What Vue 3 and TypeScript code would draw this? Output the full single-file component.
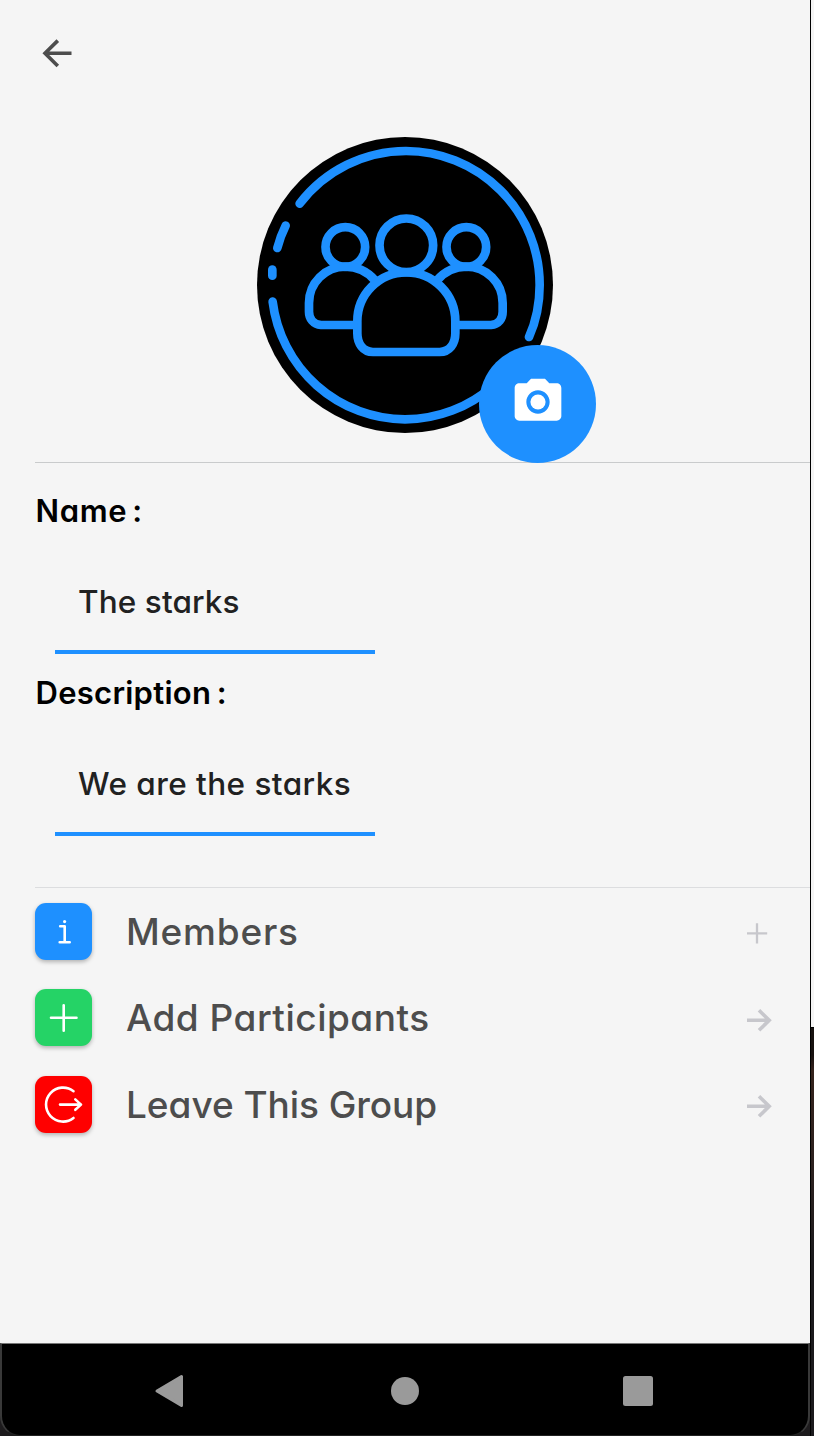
<script setup lang="ts">
type Kind = 'info' | 'add' | 'leave'

interface Field {
  label: string
  value: string
  key: string
}

interface Action {
  kind: Kind
  label: string
}

const fields: Field[] = [
  { key: 'name', label: 'Name :', value: 'The starks' },
  { key: 'description', label: 'Description :', value: 'We are the starks' },
]

const actions: Action[] = [
  { kind: 'info', label: 'Members' },
  { kind: 'add', label: 'Add Participants' },
  { kind: 'leave', label: 'Leave This Group' },
]
</script>

<template>
  <div class="desktop">
    <div class="screen">
      <header class="top">
        <svg class="back" width="32" height="32" viewBox="0 0 32 32">
          <path d="M30.5 15.3H4M16.8 2.6 4 15.3l12.8 12.8" />
        </svg>
      </header>

      <section class="hero">
        <div class="avatar">
          <svg class="group" width="296" height="296" viewBox="51 51 888 888">
            <circle class="disc" cx="495" cy="495" r="444" />
            <g class="lines">
              <path d="M179 251A403 403 0 0 1 498 93A402 402 0 0 1 899 495Q899 580 867 651" />
              <path d="M137 317Q121 349 112 384" />
              <path d="M97 449V467" />
              <path d="M98 545A403 403 0 0 0 495 898A403 403 0 0 0 760 797" />
              <circle cx="499" cy="376" r="80.5" />
              <circle cx="316" cy="381" r="59.5" />
              <circle cx="679" cy="381" r="59.5" />
              <path d="M399 696C369 696 352 671 352 640V604A147 147 0 0 1 646 604V640C646 671 629 696 599 696Z" />
              <path class="open" d="M352 615H243C220 613 207 596 207 575V549A109 109 0 0 1 316 440C352 440 380 453 404 480" />
              <path class="open" d="M646 615H753C776 613 788 596 788 575V549A109 109 0 0 0 679 440C643 440 616 453 592 480" />
            </g>
          </svg>
          <div class="camera">
            <svg width="56" height="56" viewBox="0 0 24 24">
              <circle cx="12" cy="12" r="3.25" />
              <path d="M9 2 7.17 4H4c-1.1 0-2 .9-2 2v12c0 1.1.9 2 2 2h16c1.1 0 2-.9 2-2V6c0-1.1-.9-2-2-2h-3.17L15 2H9zm3 15c-2.76 0-5-2.24-5-5s2.24-5 5-5 5 2.24 5 5-2.24 5-5 5z" />
            </svg>
          </div>
        </div>
      </section>

      <section class="fields">
        <div v-for="f in fields" :key="f.key" class="field" :class="f.key">
          <div class="label">{{ f.label }}</div>
          <div class="input"><span>{{ f.value }}</span></div>
        </div>
      </section>

      <section class="actions">
        <div v-for="a in actions" :key="a.kind" class="row" :class="a.kind">
          <div class="tile">
            <svg width="57" height="57" viewBox="0 0 57 57">
              <template v-if="a.kind === 'info'">
                <path d="M25.2 23.2h4.5V39M24.7 39.2h10" />
                <circle class="dot" cx="29.6" cy="18.6" r="1.6" />
              </template>
              <path v-else-if="a.kind === 'add'" d="M28.7 16.3v25.4M16 28.7h25.5" />
              <path v-else d="M38.5 15.2A17 17 0 1 0 38.5 42M25 28.6h21M40.3 23.4l5.7 5.2-5.7 5.2" />
            </svg>
          </div>
          <span class="caption">{{ a.label }}</span>
          <svg class="hint" width="28" height="28" viewBox="0 0 28 28">
            <path v-if="a.kind === 'info'" class="thin" d="M1 14.3h20.2M11 4.2v20.2" />
            <path v-else d="M1 14.3h22.5M13 4.3l10.2 10L13 24.3" />
          </svg>
        </div>
      </section>

      <footer class="nav">
        <svg width="30" height="34" viewBox="0 0 30 34">
          <path d="M3 17 27.5 2.5V31.5Z" stroke-width="3" stroke-linejoin="round" />
        </svg>
        <svg width="30" height="34" viewBox="0 0 30 34"><circle cx="16" cy="17" r="14" /></svg>
        <svg width="30" height="34" viewBox="0 0 30 34"><rect x="0" y="2" width="30" height="30" rx="2.5" /></svg>
      </footer>
    </div>
    <div class="edge"></div>
  </div>
</template>

<style>
body {
  background: #f5f5f5;
}
</style>

<style scoped>
.desktop {
  display: flex;
  width: 814px;
  height: 1436px;
  overflow: hidden;
  background: #1d1b1d;
  font-family: Inter, "Liberation Sans", sans-serif;
  font-feature-settings: "cv11" 1;
}
.screen {
  width: 810px;
  height: 1436px;
  flex: none;
  display: flex;
  flex-direction: column;
  background: linear-gradient(#f5f5f5 0 1343px, #1d1b1d 1343px);
}
.edge {
  width: 4px;
  box-sizing: border-box;
  border-left: 1px solid #000;
  background: linear-gradient(#f4f4f4 0 1027px, #000 1027px 1028px, #17110f 1028px 1055px, #34221c 1070px, #2b211f 1180px, #1b1a1d 1260px);
}
.top {
  height: 100px;
  padding: 38px 0 0 41px;
  box-sizing: border-box;
}
.back {
  display: block;
  fill: none;
  stroke: #4d4d4d;
  stroke-width: 3.6;
}
.hero {
  height: 363px;
  margin-left: 35px;
  box-sizing: border-box;
  padding: 37px 0 0 222px;
  border-bottom: 1px solid #c9cbcc;
}
.avatar {
  position: relative;
  width: 296px;
  height: 296px;
}
.group {
  display: block;
}
.lines {
  fill: none;
  stroke: #1e90ff;
  stroke-width: 26;
  stroke-linecap: round;
}
.lines .open {
  stroke-linecap: butt;
}
.camera {
  position: absolute;
  left: 222px;
  top: 207.5px;
  width: 117px;
  height: 118px;
  border-radius: 50%;
  background: #1e90ff;
  display: flex;
  align-items: center;
  justify-content: center;
  padding-bottom: 3px;
  box-sizing: border-box;
}
.camera svg {
  fill: #fff;
}
.fields {
  height: 425px;
  box-sizing: border-box;
  margin-left: 35px;
  padding-top: 28px;
  border-bottom: 1px solid #dcdddf;
}
.field {
  height: 182.3px;
}
.label {
  height: 40px;
  padding-left: 0.6px;
  line-height: 40px;
  font-size: 31px;
  font-weight: 600;
  color: #000;
  white-space: nowrap;
  letter-spacing: 0.6px;
  word-spacing: -3.2px;
}
.description .label {
  letter-spacing: 0.25px;
  word-spacing: -2.5px;
}
.input {
  width: 320px;
  height: 123px;
  box-sizing: border-box;
  margin-left: 20px;
  padding: 50px 0 0 23px;
  line-height: 42px;
  border-bottom: 4px solid #1e90ff;
  font-size: 31.5px;
  font-weight: 450;
  color: #212121;
  white-space: nowrap;
  letter-spacing: 0.1px;
}
.description .input {
  letter-spacing: 0.45px;
}
.actions {
  margin-left: 35px;
  padding-top: 14.6px;
  display: flex;
  flex-direction: column;
  gap: 29.6px;
  flex: 1;
}
.row {
  display: flex;
  align-items: center;
  height: 57px;
}
.tile {
  width: 57px;
  height: 57px;
  border-radius: 11px;
  box-shadow: 0 2px 4px rgba(0, 0, 0, 0.28);
}
.tile svg {
  display: block;
  fill: none;
  stroke: #fff;
  stroke-width: 2.6;
  stroke-linecap: round;
  stroke-linejoin: round;
}
.tile .dot {
  fill: #fff;
  stroke: none;
}
.info .tile {
  background: #1e90ff;
}
.add .tile {
  background: #25d366;
}
.leave .tile {
  background: #f00;
}
.caption {
  flex: 1;
  margin-left: 34px;
  font-size: 37px;
  line-height: 57px;
  font-weight: 500;
  color: #4d4d4d;
  white-space: nowrap;
}
.info .caption {
  letter-spacing: 0.8px;
}
.add .caption {
  letter-spacing: 0.5px;
}
.leave .caption {
  letter-spacing: -0.05px;
}
.hint {
  margin: 4px 36px 0 0;
  fill: none;
  stroke: #c7c7cc;
  stroke-width: 3.6;
}
.hint .thin {
  stroke-width: 2.3;
}
.nav {
  height: 93px;
  box-sizing: border-box;
  display: flex;
  justify-content: space-between;
  align-items: center;
  padding: 2px 155px 0 152px;
  border: 2px solid #393939;
  border-top: 1px solid #777;
  border-bottom: 1px solid #222;
  border-radius: 0 0 20px 20px;
  background: #000;
}
.nav svg {
  fill: #9a9a9a;
}
.nav path {
  stroke: #9a9a9a;
}
</style>
